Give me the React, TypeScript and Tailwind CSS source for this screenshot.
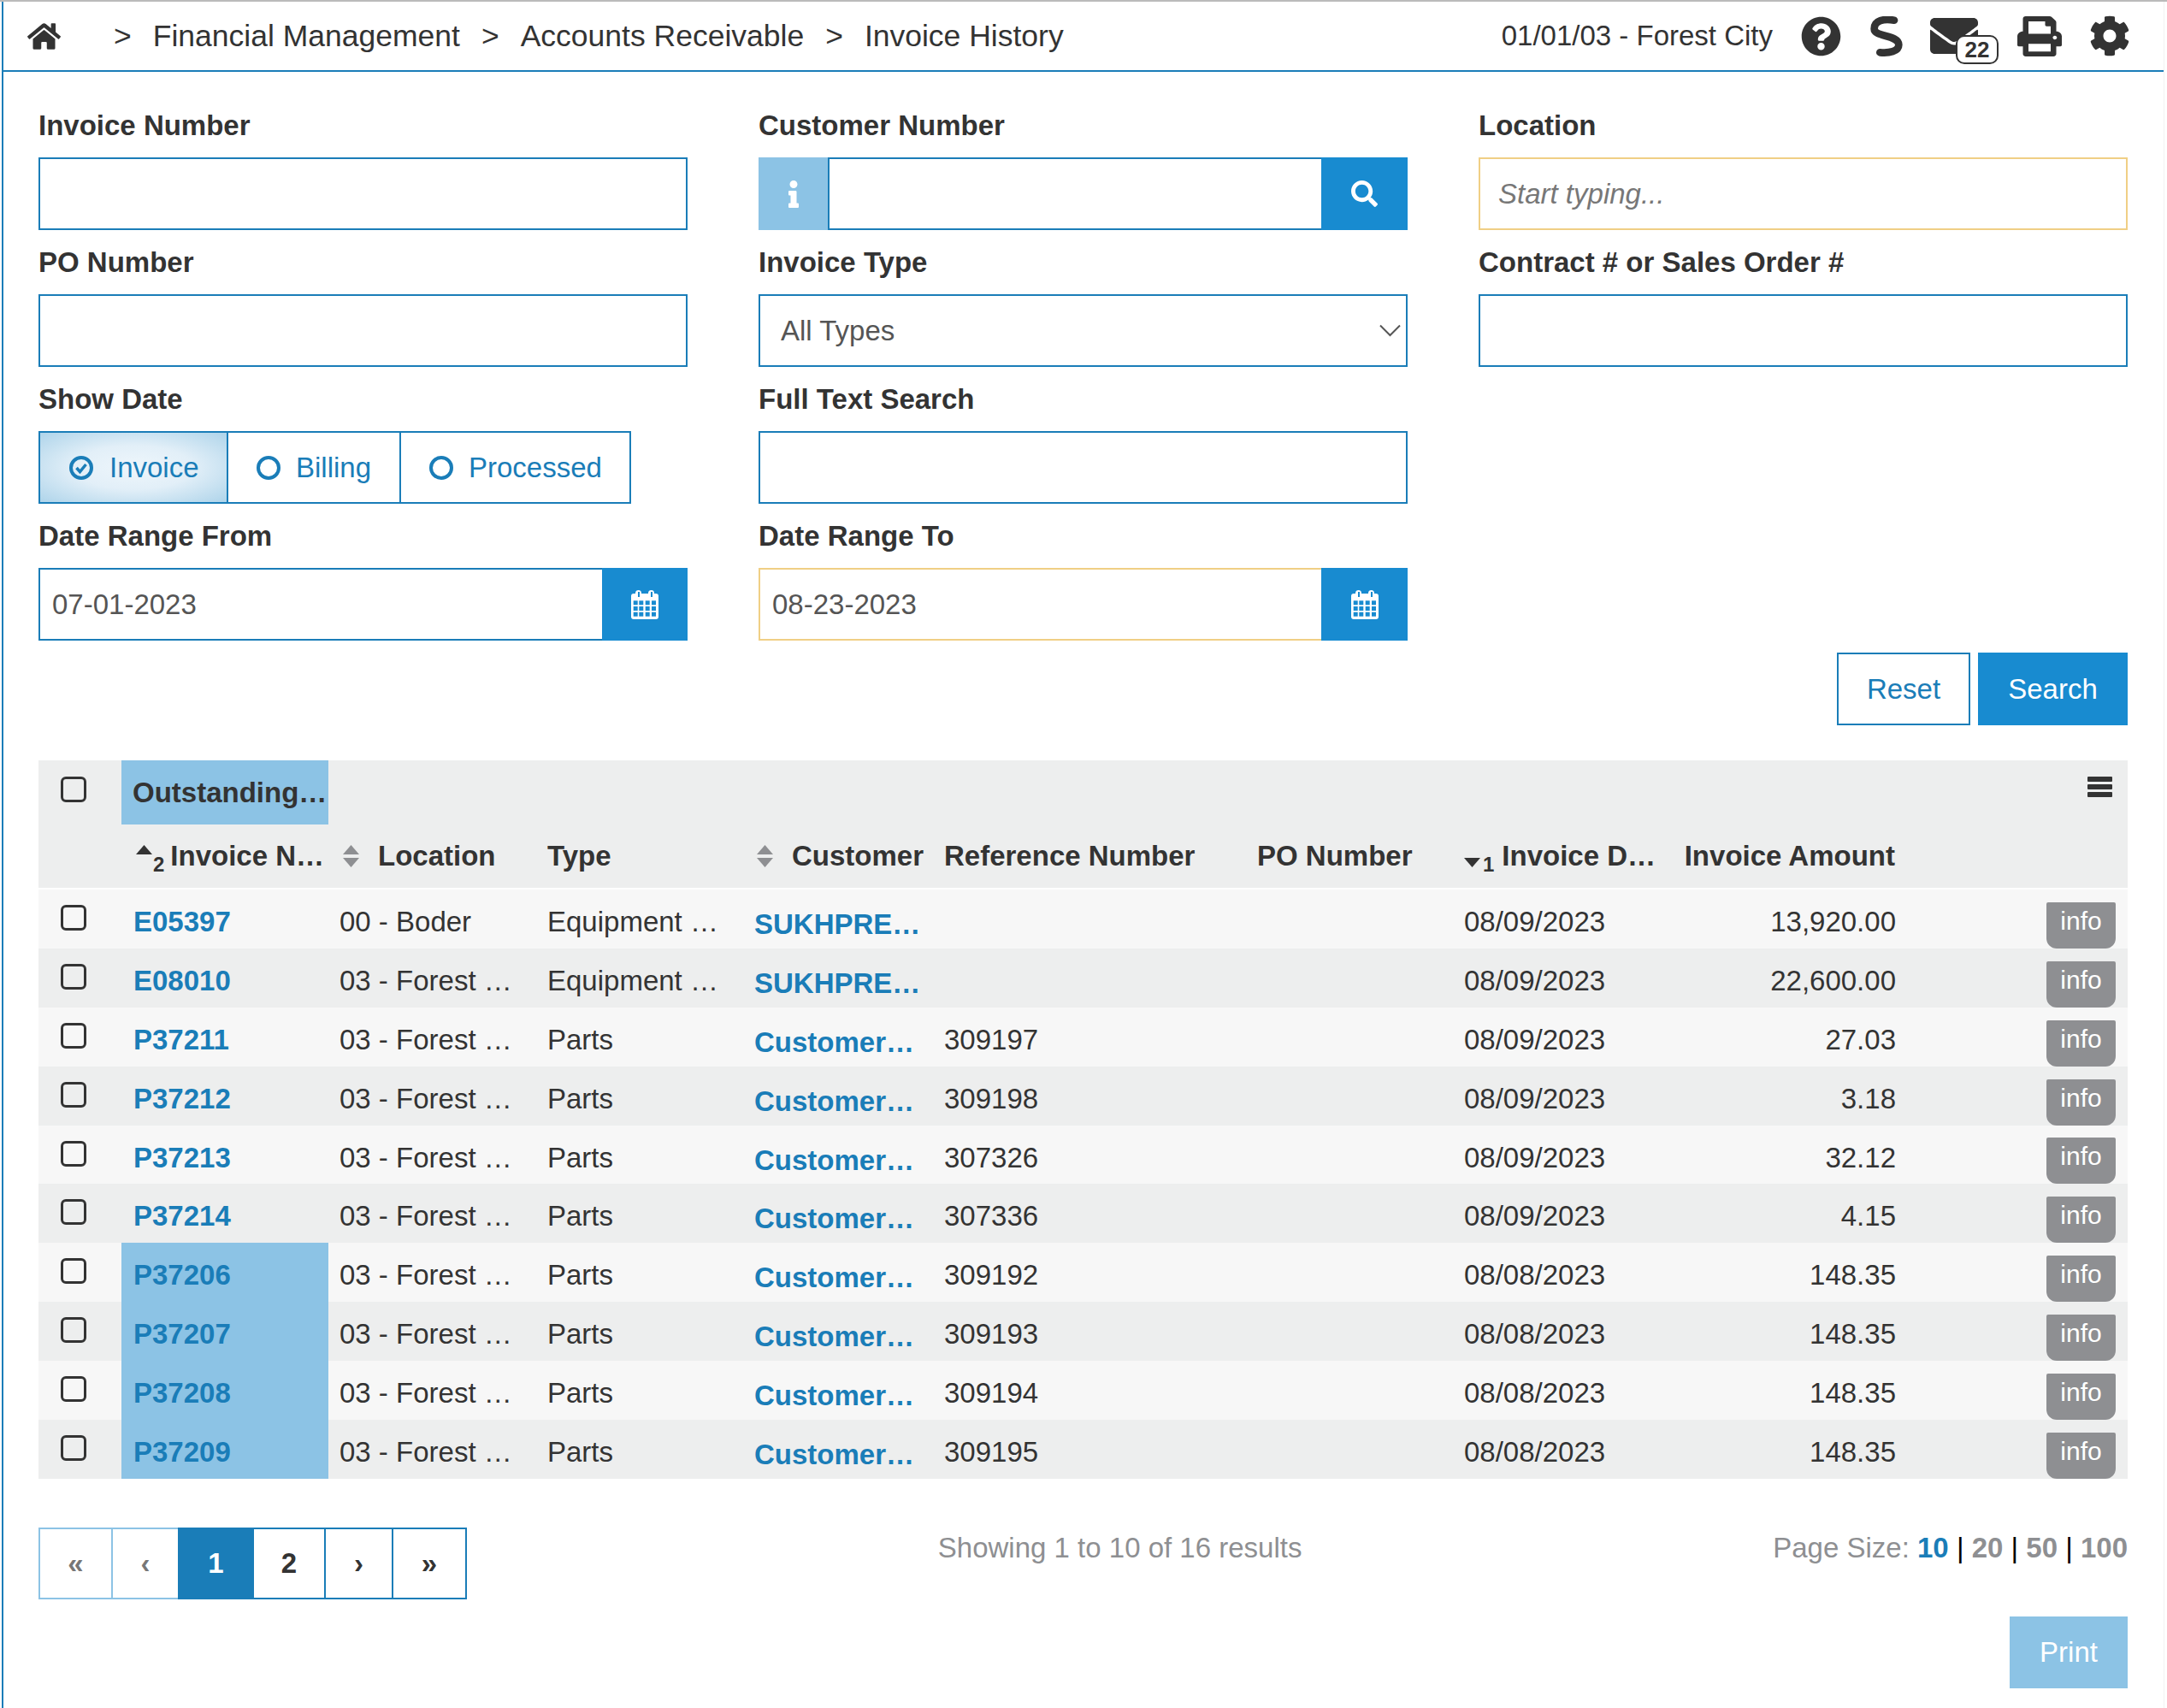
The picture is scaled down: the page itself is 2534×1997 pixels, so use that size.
import { FaCog, FaEnvelope, FaHome, FaInfo, FaPrint, FaQuestionCircle, FaSearch } from 'react-icons/fa'

const rows = [
  { id: 'E05397', loc: '00 - Boder', type: 'Equipment …', cust: 'SUKHPRE…', ref: '', date: '08/09/2023', amt: '13,920.00' },
  { id: 'E08010', loc: '03 - Forest …', type: 'Equipment …', cust: 'SUKHPRE…', ref: '', date: '08/09/2023', amt: '22,600.00' },
  { id: 'P37211', loc: '03 - Forest …', type: 'Parts', cust: 'Customer…', ref: '309197', date: '08/09/2023', amt: '27.03' },
  { id: 'P37212', loc: '03 - Forest …', type: 'Parts', cust: 'Customer…', ref: '309198', date: '08/09/2023', amt: '3.18' },
  { id: 'P37213', loc: '03 - Forest …', type: 'Parts', cust: 'Customer…', ref: '307326', date: '08/09/2023', amt: '32.12' },
  { id: 'P37214', loc: '03 - Forest …', type: 'Parts', cust: 'Customer…', ref: '307336', date: '08/09/2023', amt: '4.15' },
  { id: 'P37206', loc: '03 - Forest …', type: 'Parts', cust: 'Customer…', ref: '309192', date: '08/08/2023', amt: '148.35', hl: true },
  { id: 'P37207', loc: '03 - Forest …', type: 'Parts', cust: 'Customer…', ref: '309193', date: '08/08/2023', amt: '148.35', hl: true },
  { id: 'P37208', loc: '03 - Forest …', type: 'Parts', cust: 'Customer…', ref: '309194', date: '08/08/2023', amt: '148.35', hl: true },
  { id: 'P37209', loc: '03 - Forest …', type: 'Parts', cust: 'Customer…', ref: '309195', date: '08/08/2023', amt: '148.35', hl: true },
]

const inputCls = 'h-[85px] w-full border-2 border-[#1a7db8] bg-white px-[14px] text-[33px] text-[#555] outline-none'

function Label({ children }: { children: React.ReactNode }) {
  return <div className="flex h-[75px] items-center font-bold">{children}</div>
}

function CalendarIcon() {
  const xs = [2.7, 9.3, 16.7, 24]
  const ys = [12.3, 19, 25.7]
  return (
    <svg width="32" height="34" viewBox="0 0 32 34">
      <rect x="0" y="4" width="32" height="30" rx="3" fill="#fff" />
      <rect x="5" y="0" width="7" height="10" rx="3.5" fill="#fff" />
      <rect x="20" y="0" width="7" height="10" rx="3.5" fill="#fff" />
      <rect x="8" y="2" width="2" height="6" fill="#188bd0" />
      <rect x="23" y="2" width="2" height="6" fill="#188bd0" />
      {ys.map(y => xs.map(x => <rect key={`${x}-${y}`} x={x} y={y} width="5" height="5" fill="#188bd0" />))}
    </svg>
  )
}

function SwirlIcon() {
  return (
    <svg width="38" height="47" viewBox="0 0 114 141" fill="none">
      <path d="M84 14 C48 8 14 14 14 44 C14 74 100 64 100 100 C100 124 66 130 34 127" stroke="#333" strokeWidth="26" strokeLinecap="round" />
    </svg>
  )
}

function RadioIcon({ checked }: { checked?: boolean }) {
  return (
    <svg width="28" height="28" viewBox="0 0 28 28" fill="none">
      <circle cx="14" cy="14" r="12" stroke="#1a7db8" strokeWidth="4" />
      {checked && <path d="M8.5 14 L12.5 18.5 L19.5 10" stroke="#1a7db8" strokeWidth="3.5" />}
    </svg>
  )
}

function SortIcon({ dir }: { dir?: 'up' | 'down' }) {
  const grey = !dir
  const color = grey ? '#8e8f92' : '#333'
  return (
    <svg width="19" height="26" viewBox="0 0 19 26" className="shrink-0">
      {(grey || dir === 'up') && <path d="M9.5 0 L19 11 L0 11 Z" fill={color} />}
      {(grey || dir === 'down') && <path d="M0 15 L19 15 L9.5 26 Z" fill={color} />}
    </svg>
  )
}

function Checkbox() {
  return <input type="checkbox" className="block h-[30px] w-[30px] appearance-none rounded-[6px] border-[3px] border-[#333] bg-transparent" />
}

function PageBtn({ children, tone, w }: { children: React.ReactNode; tone: 'off' | 'on' | 'cur'; w: string }) {
  const cls =
    tone === 'off'
      ? 'border-[#8cc3e5] text-[#777]'
      : tone === 'cur'
        ? 'border-[#1a7db8] bg-[#1a7db8] text-white'
        : 'border-[#1a7db8] text-[#333]'
  return <div className={`-ml-[2px] flex h-[84px] items-center justify-center border-2 font-bold first:ml-0 ${w} ${cls}`}>{children}</div>
}

export default function App() {
  return (
    <div className="min-h-screen bg-white font-['Liberation_Sans',Arial,sans-serif] text-[33px] leading-[38px] text-[#333]">
      <div className="border-t-2 border-[#bbb]">
        <div className="ml-[2px] mr-[3px] border-l-2 border-r border-l-[#1a7db8] border-r-[#f2f2f2]">
          {/* breadcrumb bar */}
          <nav className="flex h-[82px] items-center border-b-2 border-[#1a7db8] pl-[28px] pr-[39px]">
            <FaHome size={39} />
            <div className="ml-[62px] flex items-center text-[35.5px]">
              <span>&gt;</span>
              <span className="ml-[25px]">Financial Management</span>
              <span className="mx-[25px]">&gt;</span>
              <span>Accounts Receivable</span>
              <span className="mx-[25px]">&gt;</span>
              <span>Invoice History</span>
            </div>
            <div className="ml-auto flex items-center">
              <span>01/01/03 - Forest City</span>
              <FaQuestionCircle size={47} className="ml-[33px]" />
              <div className="ml-[34px]"><SwirlIcon /></div>
              <div className="relative ml-[32px]">
                <FaEnvelope size={56} className="block" />
                <span className="absolute left-[30px] top-[27px] flex h-[34px] w-[50px] items-center justify-center rounded-[10px] border-2 border-[#333] bg-white text-[26px] font-bold">22</span>
              </div>
              <FaPrint preserveAspectRatio="none" className="ml-[46px] h-[47px] w-[52px]" />
              <FaCog size={48} className="ml-[32px]" />
            </div>
          </nav>

          <main className="pb-[23px] pl-[41px] pr-[42px] pt-[25px]">
            <div className="grid grid-cols-3 gap-x-[83px]">
              <div>
                <Label>Invoice Number</Label>
                <input className={inputCls} />
              </div>
              <div>
                <Label>Customer Number</Label>
                <div className="flex h-[85px]">
                  <div className="flex w-[81px] items-center justify-center bg-[#8cc3e5] text-white"><FaInfo size={32} /></div>
                  <input className="h-full min-w-0 flex-1 border-y-2 border-l-2 border-[#1a7db8] outline-none" />
                  <div className="flex w-[101px] items-center justify-center bg-[#188bd0] text-white"><FaSearch size={31} /></div>
                </div>
              </div>
              <div>
                <Label>Location</Label>
                <input placeholder="Start typing..." className="h-[85px] w-full border-2 border-[#f0cf85] px-[21px] text-[33px] outline-none placeholder:italic placeholder:text-[#777]" />
              </div>

              <div>
                <Label>PO Number</Label>
                <input className={inputCls} />
              </div>
              <div>
                <Label>Invoice Type</Label>
                <div className="relative">
                  <select className="h-[85px] w-full appearance-none border-2 border-[#1a7db8] bg-white pl-[24px] text-[33px] text-[#555] outline-none">
                    <option>All Types</option>
                  </select>
                  <svg width="25" height="15" viewBox="0 0 25 15" fill="none" className="absolute right-[8px] top-[35px]">
                    <path d="M1 1.5 L12.5 13 L24 1.5" stroke="#555" strokeWidth="2" />
                  </svg>
                </div>
              </div>
              <div>
                <Label>Contract # or Sales Order #</Label>
                <input className={inputCls} />
              </div>

              <div>
                <Label>Show Date</Label>
                <div className="flex h-[85px] w-[693px] border-2 border-[#1a7db8] text-[#1a7db8]">
                  <div className="flex w-[220px] items-center gap-[19px] border-r-2 border-[#1a7db8] bg-[radial-gradient(ellipse_at_center,#eef6fb_0%,#e2eff8_45%,#aed4ea_100%)] pl-[34px]">
                    <RadioIcon checked />
                    Invoice
                  </div>
                  <div className="flex w-[202px] items-center gap-[18px] border-r-2 border-[#1a7db8] pl-[33px]">
                    <RadioIcon />
                    Billing
                  </div>
                  <div className="flex flex-1 items-center gap-[18px] pl-[33px]">
                    <RadioIcon />
                    Processed
                  </div>
                </div>
              </div>
              <div>
                <Label>Full Text Search</Label>
                <input className={inputCls} />
              </div>
              <div />

              <div>
                <Label>Date Range From</Label>
                <div className="flex h-[85px]">
                  <input defaultValue="07-01-2023" className="h-full min-w-0 flex-1 border-y-2 border-l-2 border-[#1a7db8] px-[14px] text-[33px] text-[#555] outline-none" />
                  <div className="flex w-[100px] items-center justify-center bg-[#188bd0]"><CalendarIcon /></div>
                </div>
              </div>
              <div>
                <Label>Date Range To</Label>
                <div className="flex h-[85px]">
                  <input defaultValue="08-23-2023" className="h-full min-w-0 flex-1 border-y-2 border-l-2 border-[#f0cf85] px-[14px] text-[33px] text-[#555] outline-none" />
                  <div className="flex w-[101px] items-center justify-center bg-[#188bd0]"><CalendarIcon /></div>
                </div>
              </div>
              <div />
            </div>

            <div className="mt-[14px] flex justify-end gap-[9px]">
              <button className="h-[85px] w-[156px] border-2 border-[#1a7db8] text-[#1a7db8]">Reset</button>
              <button className="h-[85px] w-[175px] bg-[#188bd0] text-white">Search</button>
            </div>

            <table className="mt-[41px] w-full table-fixed border-separate border-spacing-0">
              <colgroup>
                <col className="w-[97px]" />
                <col className="w-[242px]" />
                <col className="w-[243px]" />
                <col className="w-[241px]" />
                <col className="w-[223px]" />
                <col className="w-[365px]" />
                <col className="w-[242px]" />
                <col className="w-[260px]" />
                <col className="w-[272px]" />
                <col className="w-[258px]" />
              </colgroup>
              <thead>
                <tr className="h-[75px] bg-[#edeeee]">
                  <th className="pl-[26px] pt-[19px] align-top"><Checkbox /></th>
                  <th className="bg-[#8cc3e5] pl-[13px] text-left font-bold whitespace-nowrap">Outstanding…</th>
                  <th colSpan={8} className="pr-[18px] pt-[19px] align-top">
                    <div className="ml-auto flex w-[29px] flex-col gap-[3px]">
                      <span className="h-[6px] rounded-[1px] bg-[#333]" />
                      <span className="h-[6px] rounded-[1px] bg-[#333]" />
                      <span className="h-[6px] rounded-[1px] bg-[#333]" />
                    </div>
                  </th>
                </tr>
                <tr className="h-[76px] bg-[#edeeee] text-left font-bold whitespace-nowrap">
                  <th className="border-b-2 border-white" />
                  <th className="border-b-2 border-white px-[14px] font-bold">
                    <div className="ml-[3px] flex items-center">
                      <SortIcon dir="up" />
                      <span className="ml-[1px] mr-[7px] mt-[20px] text-[24px] leading-[24px]">2</span>
                      Invoice N…
                    </div>
                  </th>
                  <th className="border-b-2 border-white px-[14px] font-bold">
                    <div className="ml-[3px] flex items-center gap-[22px]"><SortIcon />Location</div>
                  </th>
                  <th className="border-b-2 border-white pl-[13px] font-bold">Type</th>
                  <th className="border-b-2 border-white px-[14px] font-bold">
                    <div className="ml-[3px] flex items-center gap-[22px]"><SortIcon />Customer</div>
                  </th>
                  <th className="border-b-2 border-white pl-[13px] font-bold">Reference Number</th>
                  <th className="border-b-2 border-white px-[14px] font-bold">PO Number</th>
                  <th className="border-b-2 border-white px-[14px] font-bold">
                    <div className="flex items-center">
                      <SortIcon dir="down" />
                      <span className="ml-[3px] mr-[9px] mt-[20px] text-[24px] leading-[24px]">1</span>
                      Invoice D…
                    </div>
                  </th>
                  <th className="border-b-2 border-white pr-[14px] text-right font-bold">Invoice Amount</th>
                  <th className="border-b-2 border-white" />
                </tr>
              </thead>
              <tbody>
                {rows.map((r, i) => (
                  <tr key={r.id} className={`h-[68.9px] whitespace-nowrap ${i % 2 === 0 ? 'bg-[#f7f7f7]' : 'bg-[#edeeee]'}`}>
                    <td className="pl-[26px] pt-[18px] align-top"><Checkbox /></td>
                    <td className={`px-[14px] pt-[19px] align-top font-bold text-[#1a7db8] ${r.hl ? 'bg-[#8cc3e5]' : ''}`}>{r.id}</td>
                    <td className="pl-[13px] pt-[19px] align-top">{r.loc}</td>
                    <td className="pl-[13px] pt-[19px] align-top">{r.type}</td>
                    <td className="px-[14px] pt-[22px] align-top font-bold text-[#1a7db8]">{r.cust}</td>
                    <td className="pl-[13px] pt-[19px] align-top">{r.ref}</td>
                    <td className="px-[14px] pt-[19px] align-top" />
                    <td className="px-[14px] pt-[19px] align-top">{r.date}</td>
                    <td className="pr-[13px] pt-[19px] text-right align-top">{r.amt}</td>
                    <td className="pr-[14px] align-bottom">
                      <div className="ml-auto flex h-[54px] w-[81px] justify-center rounded-b-[12px] rounded-t-[2px] bg-[#8e8f92] pt-[5px] text-[30px] leading-[34px] text-white">info</div>
                    </td>
                  </tr>
                ))}
              </tbody>
            </table>

            <div className="mt-[57px] flex items-start justify-between">
              <div className="flex">
                <PageBtn tone="off" w="w-[87px]">«</PageBtn>
                <PageBtn tone="off" w="w-[80px]">‹</PageBtn>
                <PageBtn tone="cur" w="w-[89px]">1</PageBtn>
                <PageBtn tone="on" w="w-[86px]">2</PageBtn>
                <PageBtn tone="on" w="w-[81px]">›</PageBtn>
                <PageBtn tone="on" w="w-[88px]">»</PageBtn>
              </div>
              <div className="pt-[5px] text-[#8e8f92]">Showing 1 to 10 of 16 results</div>
              <div className="pt-[5px] text-[#8e8f92]">
                Page Size: <b className="text-[#1a7db8]">10</b> <span className="text-black">|</span> <b>20</b> <span className="text-black">|</span> <b>50</b> <span className="text-black">|</span> <b>100</b>
              </div>
            </div>

            <div className="mt-[20px] flex justify-end">
              <button className="h-[84px] w-[138px] bg-[#8cc3e5] text-white">Print</button>
            </div>
          </main>
        </div>
      </div>
    </div>
  )
}
